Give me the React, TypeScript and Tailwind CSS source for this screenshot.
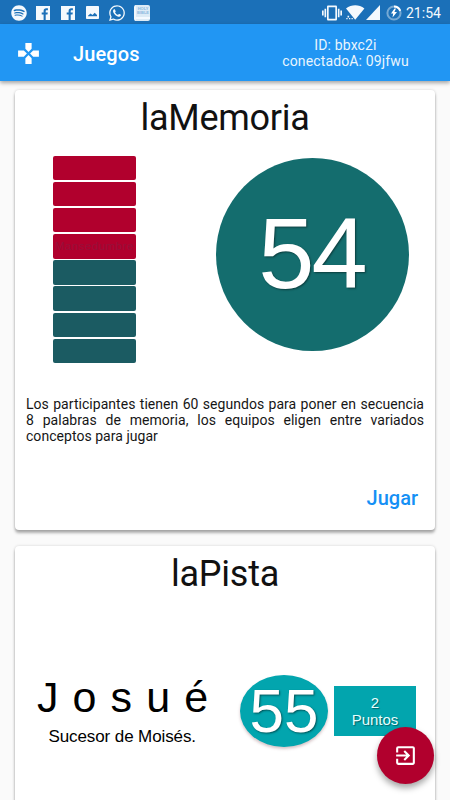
import React from "react";
import { FaSpotify, FaWhatsapp } from "react-icons/fa";
import { MdExitToApp, MdGamepad, MdVibration } from "react-icons/md";

function FacebookIcon() {
  return (
    <svg width="14" height="14" viewBox="0 0 14 14" className="block">
      <path
        fill="currentColor"
        d="M0 0h14v14H9.700V8.500h1.800l.3-2H9.700V5.200c0-.6.2-1 1-1h1.200V2.300c-.2 0-.9-.1-1.600-.1-1.700 0-2.700 1-2.700 2.800v1.500H5.700v2h1.900V14H0Z"
      />
    </svg>
  );
}

function PictureIcon() {
  return (
    <svg width="13" height="13" viewBox="0 0 13 13" className="block">
      <path
        fill="currentColor"
        fillRule="evenodd"
        d="M.8 0h11.400c.4 0 .8.400.8.800v11.400c0 .4-.4.800-.8.800H.8a.8.800 0 0 1-.8-.8V.8C0 .4.400 0 .8 0ZM2 10.300h9V9L8.700 6.700 6.500 9 4.500 7.400 2 9.700Z"
      />
    </svg>
  );
}

function BookIcon() {
  return (
    <div className="h-4 w-4 rounded-[2px] border-l-2 border-[#f0f7fc] bg-[#dcebf6]">
      <div className="flex h-[12px] flex-col items-center justify-center font-['Liberation_Sans',sans-serif] text-[4px] leading-[4px] font-bold text-[#8ab9df]">
        <span>HOLY</span>
        <span>BIBLE</span>
      </div>
      <div className="h-[2px] bg-[#f5faff]" />
    </div>
  );
}

function WifiIcon() {
  return (
    <svg width="19" height="15" viewBox="0 0 19 15" className="block" fill="currentColor">
      <path d="M0 3.500C5.500-.9 13-.9 18.400 3.500L9.200 14.700Z" />
      <path d="M1.500 10.800h1.600v1.600H1.500zM.3 13h1.300v1.300H.3zM3 13h1.300v1.300H3zM5.500 13h1.300v1.300H5.500z" />
    </svg>
  );
}

function BatteryIcon() {
  return (
    <svg width="16" height="16" viewBox="0 0 16 16" className="block" fill="none">
      <circle cx="8" cy="8" r="6.600" stroke="#75a9d4" strokeWidth="2" />
      <path d="M8 1.400A6.600 6.600 0 0 1 14.200 5.800" stroke="#fff" strokeWidth="2" />
      <path d="M8.500 3.500 5 8.600h2.200L6.500 12.500 11 7.100H8.400L10 3.500Z" fill="#fff" />
    </svg>
  );
}

function StatusBar() {
  return (
    <div className="flex h-6 items-center bg-[#1b70b8] pt-px text-[#f4f9fd]">
      <FaSpotify size={16} className="ml-[11px]" />
      <div className="ml-[9px]"><FacebookIcon /></div>
      <div className="ml-[11px]"><FacebookIcon /></div>
      <div className="ml-[11px]"><PictureIcon /></div>
      <FaWhatsapp size={18} className="ml-[9px]" />
      <div className="ml-[8px]"><BookIcon /></div>
      <MdVibration size={20} className="ml-auto" />
      <div className="ml-[4px]"><WifiIcon /></div>
      <svg width="14" height="15" viewBox="0 0 14 15" className="ml-[1px]" fill="currentColor">
        <path d="M14 0v15H0Z" />
      </svg>
      <div className="ml-[6px]"><BatteryIcon /></div>
      <span className="mr-[8px] ml-[4px] w-[36px] text-[14px] leading-6 whitespace-nowrap">21:54</span>
    </div>
  );
}

function AppBar() {
  return (
    <header className="relative z-10 flex h-[57px] items-center bg-[#2196f3] text-white shadow-[0_2px_4px_rgba(0,0,0,0.35)]">
      <MdGamepad size={25} className="mt-[2px] ml-4" />
      <h1 className="mt-[2px] ml-8 text-[20px] leading-6 font-medium tracking-[0.1px]">Juegos</h1>
      <div className="mr-[41px] ml-auto w-[127px] text-center text-[14px] leading-4 tracking-[0.140px] whitespace-nowrap text-[#e9f5fe]">
        <p>ID: bbxc2i</p>
        <p>conectadoA: 09jfwu</p>
      </div>
    </header>
  );
}

function Card({ title, children }: { title: string; children: React.ReactNode }) {
  return (
    <section className="h-[440px] shrink-0 rounded-[4px] bg-white shadow-[0_3px_3px_rgba(0,0,0,0.3),0_0_3px_rgba(0,0,0,0.16)]">
      <h2 className="pt-[7px] pb-px text-center text-[36px] leading-[42px] tracking-[-0.250px] text-[#111]">{title}</h2>
      {children}
    </section>
  );
}

const words = ["", "", "", "Mansedumbre", "", "", "", ""];

function MemoryPicture() {
  return (
    <div className="flex pt-[15.500px] pl-[38px]">
      <div className="flex w-[83px] flex-col gap-[1.600px]">
        {words.map((word, i) => (
          <div
            key={i}
            className={
              "flex h-[24.600px] items-center justify-center rounded-[2px] font-['Liberation_Sans',sans-serif] text-[11.500px] tracking-[0.5px] text-[#98103a] " +
              (i < 4 ? "bg-[#b1002d]" : "bg-[#1b5b62]")
            }
          >
            {word}
          </div>
        ))}
      </div>
      <div className="mt-[2.500px] ml-[80px] flex size-[193px] items-center justify-center rounded-full bg-[#146d6e] pr-[2px] pb-[2px] font-['Liberation_Sans',Arial,sans-serif] text-[101px] leading-none tracking-[-3px] text-white [text-shadow:1px_1px_2px_rgba(0,0,0,0.45)]">
        54
      </div>
    </div>
  );
}

function CluePicture() {
  return (
    <div className="flex pt-[77px] font-['Liberation_Sans',Arial,sans-serif] text-black">
      <div className="ml-[22px] w-[180px] whitespace-nowrap">
        <p className="pb-px text-[43px] leading-[48px] tracking-[14.100px]">Josué</p>
        <p className="mt-[5px] ml-[11.500px] text-[17px] leading-5 tracking-[-0.1px]">Sucesor de Moisés.</p>
      </div>
      <div className="mt-[2px] ml-[23px] flex h-[72px] w-[88px] items-center justify-center rounded-[50%] bg-[#02a5ae] text-[62px] leading-none text-white shadow-[0_2px_3px_rgba(120,60,70,0.3)] [text-shadow:1px_1px_2px_rgba(0,0,0,0.5)]">
        55
      </div>
      <div className="mt-[13px] ml-[6px] flex h-[50px] w-[82px] flex-col items-center justify-center bg-[#02a5ae] text-[15px] leading-[17px] text-[#e5ffff] [text-shadow:1px_1px_1px_rgba(0,0,0,0.4)]">
        <span>2</span>
        <span>Puntos</span>
      </div>
    </div>
  );
}

export default function App() {
  return (
    <div className="relative flex h-[800px] w-[450px] flex-col overflow-hidden bg-[#fafafa] font-[Roboto,sans-serif]">
      <StatusBar />
      <AppBar />
      <main className="flex min-h-0 flex-1 flex-col gap-4 overflow-hidden px-[15px] pt-[9px]">
        <Card title="laMemoria">
          <MemoryPicture />
          <p className="mx-[11px] mt-[32.500px] text-justify text-[14px] leading-4 tracking-[0.040px] text-[#161616]">
            Los participantes tienen 60 segundos para poner en secuencia 8 palabras de memoria, los equipos eligen entre
            variados conceptos para jugar
          </p>
          <div className="mt-[42px] mr-[17px] flex justify-end">
            <button className="text-[20px] leading-6 font-medium text-[#1590f5]">Jugar</button>
          </div>
        </Card>
        <Card title="laPista">
          <CluePicture />
        </Card>
      </main>
      <button
        aria-label="Salir"
        className="absolute top-[727px] left-[377px] z-20 flex size-[57px] items-center justify-center rounded-full bg-[#b1002d] text-white shadow-[0_4px_6px_rgba(0,0,0,0.35)]"
      >
        <MdExitToApp size={25} />
      </button>
    </div>
  );
}
